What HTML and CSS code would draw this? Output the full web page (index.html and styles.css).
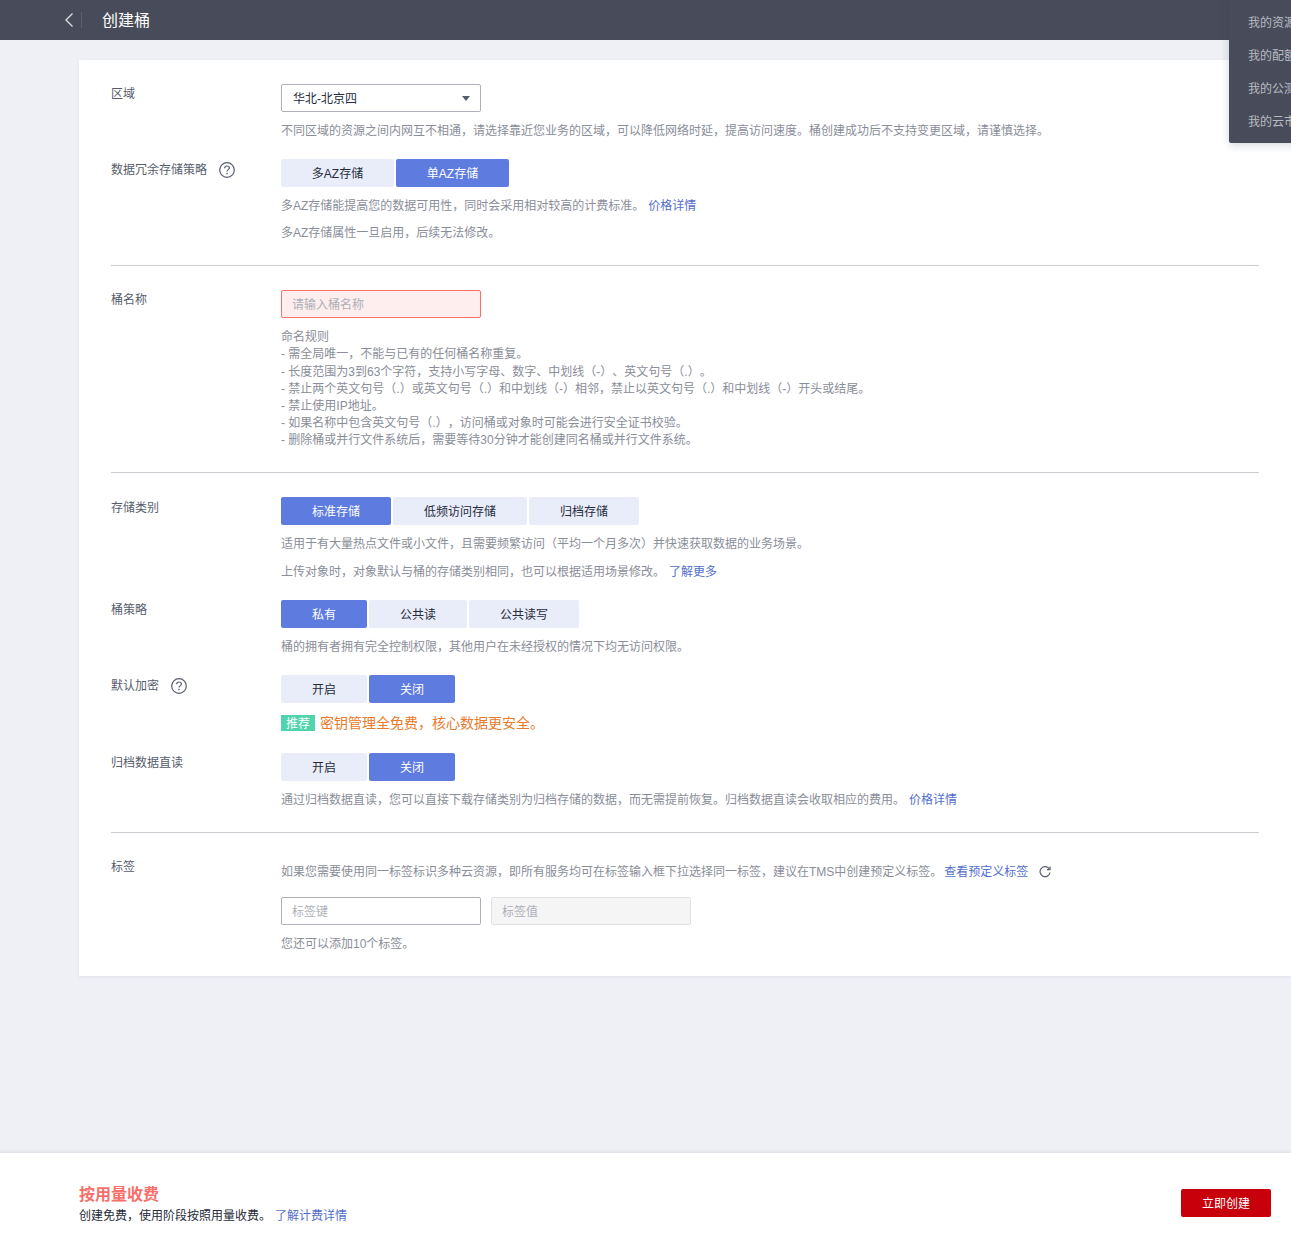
FILE: index.html
```html
<!DOCTYPE html>
<html lang="zh-CN">
  <head>
    <meta charset="UTF-8" />
    <meta name="viewport" content="width=device-width, initial-scale=1.0" />
    <title>创建桶</title>
    <link rel="stylesheet" href="styles.css">
  </head>
  <body>
    <header class="topbar">
      <svg class="back-icon" width="10" height="16" viewBox="0 0 10 16">
        <path d="M8.5 1.5 L2 8 L8.5 14.5" fill="none" stroke="#dfe1e6" stroke-width="1.3" />
      </svg>
      <span class="topbar-line"></span>
      <h1 class="topbar-title">创建桶</h1>
    </header>

    <div class="user-menu">
      <a>我的资源</a>
      <a>我的配额</a>
      <a>我的公测</a>
      <a>我的云市场</a>
    </div>

    <main class="content">
      <div class="card">
        <div class="row">
          <div class="label">区域</div>
          <div class="field">
            <div class="select">
              <span>华北-北京四</span>
              <i class="caret"></i>
            </div>
            <p class="hint">不同区域的资源之间内网互不相通，请选择靠近您业务的区域，可以降低网络时延，提高访问速度。桶创建成功后不支持变更区域，请谨慎选择。</p>
          </div>
        </div>

        <div class="row gap-top">
          <div class="label label-low">
            数据冗余存储策略
            <svg class="help-icon" width="16" height="16" viewBox="0 0 16 16">
              <circle cx="8" cy="8" r="7.3" fill="none" stroke="#575d6c" stroke-width="1.2" />
              <path d="M5.6 6.2 C5.7 4.7 6.8 4 8 4 C9.4 4 10.4 4.9 10.4 6 C10.4 7.6 8 7.7 8 9.6" fill="none" stroke="#575d6c" stroke-width="1.2" />
              <rect x="7.3" y="10.8" width="1.4" height="1.4" fill="#575d6c" />
            </svg>
          </div>
          <div class="field">
            <div class="btn-group">
              <button class="seg seg-az">多AZ存储</button>
              <button class="seg seg-az active">单AZ存储</button>
            </div>
            <p class="hint">多AZ存储能提高您的数据可用性，同时会采用相对较高的计费标准。<a class="link">价格详情</a></p>
            <p class="hint">多AZ存储属性一旦启用，后续无法修改。</p>
          </div>
        </div>

        <hr class="divider" />

        <div class="row">
          <div class="label">桶名称</div>
          <div class="field">
            <input class="text-input error" type="text" placeholder="请输入桶名称" />
            <div class="rules">
              命名规则<br />
              - 需全局唯一，不能与已有的任何桶名称重复。<br />
              - 长度范围为3到63个字符，支持小写字母、数字、中划线（-）、英文句号（.）。<br />
              - 禁止两个英文句号（.）或英文句号（.）和中划线（-）相邻，禁止以英文句号（.）和中划线（-）开头或结尾。<br />
              - 禁止使用IP地址。<br />
              - 如果名称中包含英文句号（.），访问桶或对象时可能会进行安全证书校验。<br />
              - 删除桶或并行文件系统后，需要等待30分钟才能创建同名桶或并行文件系统。
            </div>
          </div>
        </div>

        <hr class="divider divider-rules" />

        <div class="row">
          <div class="label label-low">存储类别</div>
          <div class="field">
            <div class="btn-group">
              <button class="seg active">标准存储</button>
              <button class="seg">低频访问存储</button>
              <button class="seg">归档存储</button>
            </div>
            <p class="hint">适用于有大量热点文件或小文件，且需要频繁访问（平均一个月多次）并快速获取数据的业务场景。</p>
            <p class="hint hint-wide">上传对象时，对象默认与桶的存储类别相同，也可以根据适用场景修改。<a class="link">了解更多</a></p>
          </div>
        </div>

        <div class="row gap-top">
          <div class="label">桶策略</div>
          <div class="field">
            <div class="btn-group">
              <button class="seg active">私有</button>
              <button class="seg">公共读</button>
              <button class="seg">公共读写</button>
            </div>
            <p class="hint">桶的拥有者拥有完全控制权限，其他用户在未经授权的情况下均无访问权限。</p>
          </div>
        </div>

        <div class="row gap-top">
          <div class="label label-low">
            默认加密
            <svg class="help-icon" width="16" height="16" viewBox="0 0 16 16">
              <circle cx="8" cy="8" r="7.3" fill="none" stroke="#575d6c" stroke-width="1.2" />
              <path d="M5.6 6.2 C5.7 4.7 6.8 4 8 4 C9.4 4 10.4 4.9 10.4 6 C10.4 7.6 8 7.7 8 9.6" fill="none" stroke="#575d6c" stroke-width="1.2" />
              <rect x="7.3" y="10.8" width="1.4" height="1.4" fill="#575d6c" />
            </svg>
          </div>
          <div class="field">
            <div class="btn-group">
              <button class="seg">开启</button>
              <button class="seg active">关闭</button>
            </div>
            <div class="promo">
              <span class="promo-tag">推荐</span>
              <span class="promo-text">密钥管理全免费，核心数据更安全。</span>
            </div>
          </div>
        </div>

        <div class="row gap-top-sm">
          <div class="label">归档数据直读</div>
          <div class="field">
            <div class="btn-group">
              <button class="seg">开启</button>
              <button class="seg active">关闭</button>
            </div>
            <p class="hint">通过归档数据直读，您可以直接下载存储类别为归档存储的数据，而无需提前恢复。归档数据直读会收取相应的费用。<a class="link">价格详情</a></p>
          </div>
        </div>

        <hr class="divider" />

        <div class="row">
          <div class="label">标签</div>
          <div class="field">
            <p class="hint hint-first">
              如果您需要使用同一标签标识多种云资源，即所有服务均可在标签输入框下拉选择同一标签，建议在TMS中创建预定义标签。<a class="link">查看预定义标签</a>
              <svg class="refresh-icon" width="12" height="12" viewBox="0 0 12 12">
                <path d="M10.3 3 A5 5 0 1 0 11 6.5" fill="none" stroke="#575d6c" stroke-width="1.2" />
                <path d="M11 0.6 V3.6 H8" fill="none" stroke="#575d6c" stroke-width="1.2" />
              </svg>
            </p>
            <div class="tag-inputs">
              <input class="text-input" type="text" placeholder="标签键" />
              <input class="text-input disabled" type="text" placeholder="标签值" disabled />
            </div>
            <p class="hint">您还可以添加10个标签。</p>
          </div>
        </div>
      </div>
    </main>

    <footer class="footer">
      <div class="price">
        <div class="price-title">按用量收费</div>
        <div class="price-desc">创建免费，使用阶段按照用量收费。<a class="link">了解计费详情</a></div>
      </div>
      <button class="create-btn">立即创建</button>
    </footer>
  </body>
</html>
```

FILE: styles.css
```css
html,
body {
  height: 100%;
  margin: 0;
  overflow: hidden;
}
body {
  display: flex;
  flex-direction: column;
  background-color: #eef0f5;
  color: #575d6c;
  font-family: "Liberation Sans", "Noto Sans CJK SC", sans-serif;
  font-size: 12px;
  line-height: 18px;
  text-spacing-trim: space-all;
}
p {
  margin: 0;
}
button,
input {
  font-family: inherit;
  font-size: 12px;
}

/* top bar */
.topbar {
  display: flex;
  align-items: center;
  flex: none;
  height: 40px;
  padding-left: 64px;
  background-color: #484c5a;
}
.back-icon {
  flex: none;
}
.topbar-line {
  width: 1px;
  height: 16px;
  margin-left: 7px;
  background-color: #5c606d;
}
.topbar-title {
  margin: 2px 0 0 20px;
  color: #fff;
  font-size: 16px;
  font-weight: 400;
}
.user-menu {
  position: absolute;
  top: 0;
  left: 1229px;
  width: 120px;
  height: 143px;
  padding-top: 7px;
  box-sizing: border-box;
  background-color: #484c5a;
  border-radius: 0 0 0 2px;
  box-shadow: 0 2px 8px rgba(37, 43, 58, 0.2);
}
.user-menu a {
  display: block;
  height: 33px;
  padding-left: 19px;
  color: #b8bac1;
  line-height: 33px;
  white-space: nowrap;
}

/* form card */
.content {
  flex: 1;
  padding: 20px 0 0 79px;
}
.card {
  padding: 24px 32px 22px 32px;
  background-color: #fff;
  box-shadow: 0 1px 3px rgba(37, 43, 58, 0.08);
}
.row {
  display: grid;
  grid-template-columns: 170px 1fr;
}
.gap-top {
  margin-top: 18px;
}
.gap-top-sm {
  margin-top: 22px;
}
.label {
  display: flex;
  align-items: flex-start;
  line-height: 20px;
}
.label-low {
  padding-top: 1px;
}
.help-icon {
  flex: none;
  margin: 2px 0 0 12px;
}
.hint {
  margin-top: 9px;
  color: #8a8e99;
  line-height: 20px;
}
.hint + .hint {
  margin-top: 7px;
}
.hint + .hint-wide {
  margin-top: 8px;
}
.hint-first {
  margin-top: 5px;
}
.link {
  margin-left: 4px;
  color: #526ecc;
}
.hint-first .link {
  margin-left: 2px;
}
.refresh-icon {
  margin-left: 7px;
  vertical-align: -2px;
}
.divider {
  height: 1px;
  margin: 22px 0 24px;
  border: 0;
  background-color: #c9ccd3;
}
.divider-rules {
  margin-top: 22.65px;
}

/* controls */
.select {
  display: flex;
  justify-content: space-between;
  align-items: center;
  box-sizing: border-box;
  width: 200px;
  height: 28px;
  padding: 0 10px 0 11px;
  border: 1px solid #adb0b8;
  border-radius: 2px;
  color: #252b3a;
}
.select span {
  padding-top: 2px;
}
.caret {
  width: 0;
  height: 0;
  border-top: 5px solid #575d6c;
  border-left: 4px solid transparent;
  border-right: 4px solid transparent;
}
.btn-group {
  display: flex;
  gap: 2px;
}
.seg {
  height: 28px;
  padding: 0 31px 2px;
  border: 0;
  border-radius: 2px;
  background-color: #e9edfa;
  color: #252b3a;
}
.seg-az {
  width: 113px;
  padding-left: 0;
  padding-right: 0;
}
.seg.active {
  background-color: #5e7ce0;
  color: #fff;
}
.text-input {
  display: block;
  box-sizing: border-box;
  width: 200px;
  height: 28px;
  padding: 2px 10px 0;
  border: 1px solid #adb0b8;
  border-radius: 2px;
  outline: none;
}
.text-input::placeholder {
  color: #adb0b8;
}
.text-input.error {
  border-color: #f66f6a;
  background-color: #ffeeed;
}
.text-input.disabled {
  border-color: #dfe1e6;
  background-color: #f5f5f6;
}
.rules {
  margin-top: 11.3px;
  color: #8a8e99;
  line-height: 17.15px;
}
.promo {
  display: flex;
  align-items: center;
  height: 16px;
  margin-top: 12px;
}
.promo-tag {
  width: 34px;
  height: 16px;
  background-color: #50d4ab;
  color: #fff;
  line-height: 18px;
  text-align: center;
}
.promo-text {
  margin-left: 5px;
  color: #e87a2a;
  font-size: 14px;
}
.tag-inputs {
  display: flex;
  gap: 10px;
  margin-top: 15px;
}

/* bottom bar */
.footer {
  display: flex;
  justify-content: space-between;
  align-items: center;
  flex: none;
  box-sizing: border-box;
  height: 100px;
  padding: 0 20px 0 79px;
  background-color: #fff;
  box-shadow: 0 -1px 3px rgba(37, 43, 58, 0.1);
}
.price {
  margin-top: 3px;
}
.price-title {
  margin-bottom: 2px;
  color: #f66f6a;
  font-size: 16px;
  font-weight: 700;
  line-height: 20px;
}
.price-desc {
  color: #252b3a;
}
.create-btn {
  width: 90px;
  height: 28px;
  padding-bottom: 2px;
  border: 0;
  border-radius: 2px;
  background-color: #c7000b;
  color: #fff;
}
```
